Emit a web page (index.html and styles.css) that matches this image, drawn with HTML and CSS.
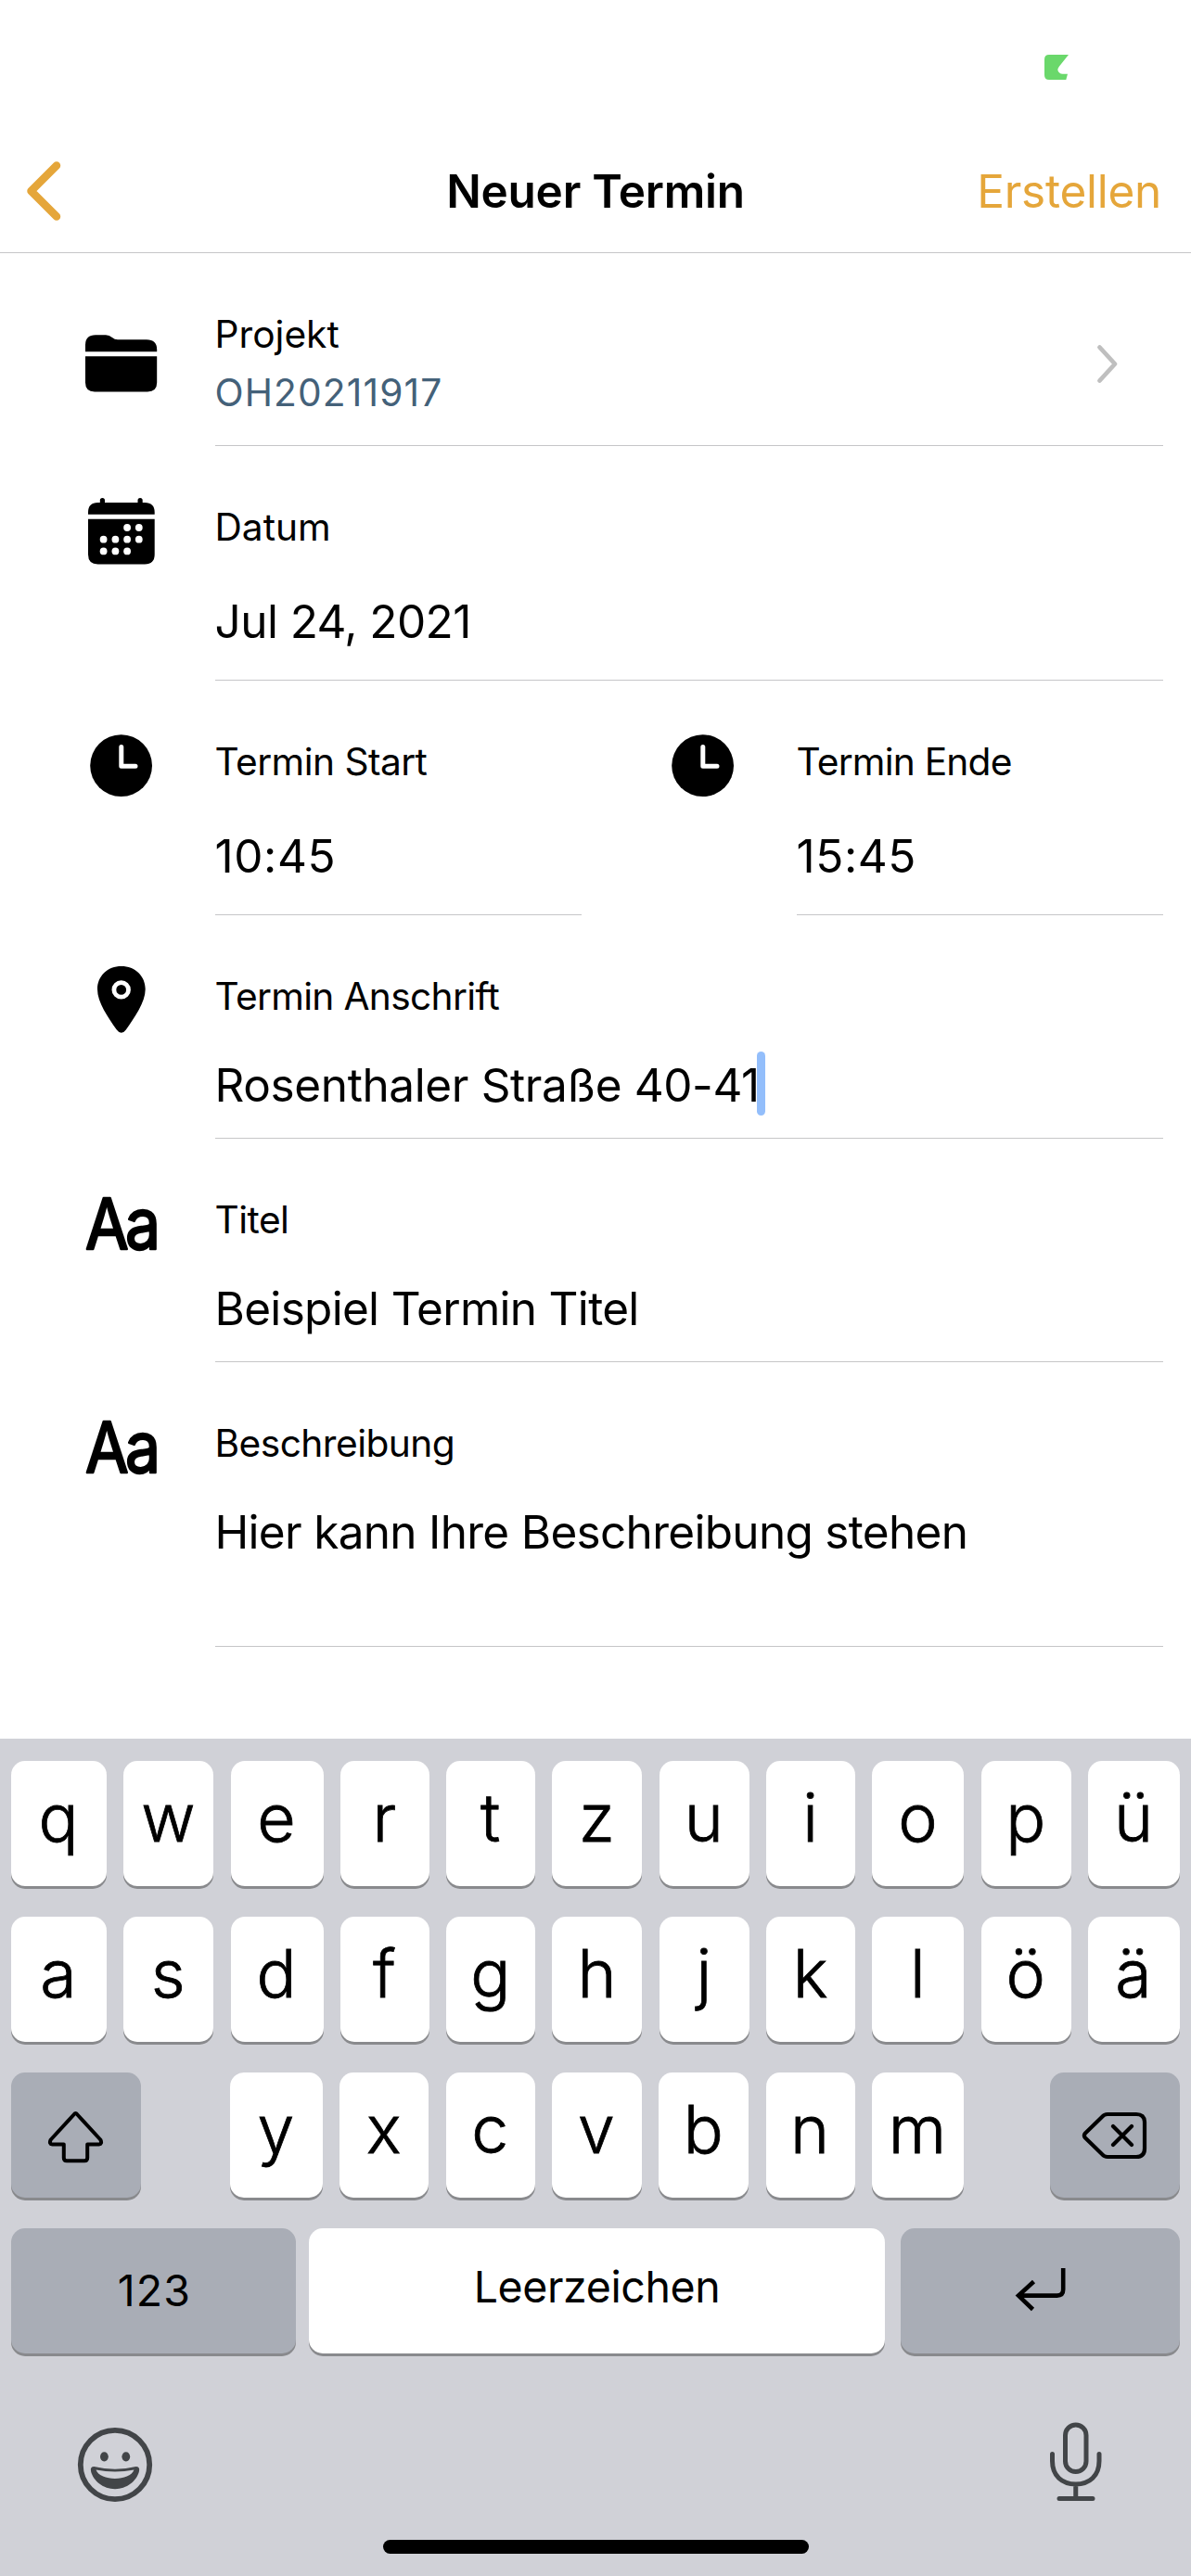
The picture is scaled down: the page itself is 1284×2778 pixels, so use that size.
FILE: index.html
```html
<!DOCTYPE html>
<html lang="de">
<head>
<meta charset="utf-8">
<title>Neuer Termin</title>
<link rel="stylesheet" href="styles.css">
</head>
<body>
<svg class="defs" width="0" height="0" aria-hidden="true">
  <symbol id="clock" viewBox="0 0 80 80">
    <circle cx="39.6" cy="39.7" r="33.4"/>
    <path d="M39.8 19.5V40.2H55" fill="none" stroke="#fff" stroke-width="5" stroke-linecap="round" stroke-linejoin="round"/>
  </symbol>
</svg>
<div class="screen">
  <header class="status">
    <svg width="26" height="27" viewBox="0 0 26 27"><path d="M5 0H26L16 12.500Q12.500 17 16.500 19.800Q17.500 20.700 19.500 20.700H25L23.300 27H5Q0 27 0 22V5Q0 0 5 0Z" fill="#6ad86b"/></svg>
  </header>
  <nav class="nav">
    <svg class="back" width="40" height="70" viewBox="0 0 40 70"><path d="M34 7.500L6.500 35L34 62.500" fill="none" stroke="#e5a63a" stroke-width="8.500" stroke-linecap="round" stroke-linejoin="round"/></svg>
    <h1 class="title">Neuer Termin</h1>
    <a class="create">Erstellen</a>
  </nav>
  <main class="form">
    <section class="row">
      <svg class="icon icon-folder" viewBox="0 0 80 80"><path d="M1 27.300V20Q1 9.300 12 9.300H23Q27 9.300 30 12Q32.500 14.300 36 14.300H67Q78.200 14.300 78.200 25V27.300ZM1 32.300H78.200V60.500Q78.200 70.400 68 70.400H11Q1 70.400 1 60.500Z"/></svg>
      <div class="field project">
        <div>
          <div class="label">Projekt</div>
          <div class="label number">OH20211917</div>
        </div>
        <svg class="disclosure" width="26" height="44" viewBox="0 0 26 44"><path d="M4.500 4.500L21 22.500L4.500 40.500" fill="none" stroke="#bfbfbf" stroke-width="4.800" stroke-linecap="round" stroke-linejoin="round"/></svg>
      </div>
    </section>
    <section class="row">
      <svg class="icon" viewBox="0 0 80 80">
        <path d="M4 21.800V19.500Q4 9 14.500 9H16.800V6.500Q16.800 4 19.400 4T22 6.500V9H57.500V6.500Q57.500 4 60.100 4T62.700 6.500V9H65Q75.700 9 75.700 19.500V21.800ZM4 26.700H75.700V65Q75.700 75.400 65 75.400H14.500Q4 75.400 4 65Z"/>
        <g fill="#fff"><circle cx="46.100" cy="36" r="3.900"/><circle cx="58.800" cy="36" r="3.900"/><circle cx="20.600" cy="48.700" r="3.900"/><circle cx="33.400" cy="48.700" r="3.900"/><circle cx="46.100" cy="48.700" r="3.900"/><circle cx="58.800" cy="48.700" r="3.900"/><circle cx="20.600" cy="61.400" r="3.900"/><circle cx="33.400" cy="61.400" r="3.900"/><circle cx="46.100" cy="61.400" r="3.900"/></g>
      </svg>
      <div class="field">
        <div class="label">Datum</div>
        <div class="value picker date">Jul 24, 2021</div>
      </div>
    </section>
    <div class="pair">
      <section class="row">
        <svg class="icon"><use href="#clock"/></svg>
        <div class="field">
          <div class="label tight">Termin Start</div>
          <div class="value picker time">10:45</div>
        </div>
      </section>
      <section class="row">
        <svg class="icon"><use href="#clock"/></svg>
        <div class="field">
          <div class="label tighter">Termin Ende</div>
          <div class="value picker time">15:45</div>
        </div>
      </section>
    </div>
    <section class="row">
      <svg class="icon" viewBox="0 0 80 80">
        <path d="M39.800 3C25 3 14 13.500 14 27.700C14 42 25.500 58 34.800 71.500Q37 74.700 39.800 74.700T44.800 71.500C54.100 58 65.700 42 65.700 27.700C65.700 13.500 54.600 3 39.800 3Z"/>
        <circle cx="39.700" cy="28.400" r="7.800" fill="none" stroke="#fff" stroke-width="4.800"/>
      </svg>
      <div class="field">
        <div class="label anschrift">Termin Anschrift</div>
        <div class="value address">Rosenthaler Straße 40-41<span class="caret"></span></div>
      </div>
    </section>
    <section class="row">
      <svg class="icon" viewBox="0 0 80 80"><text class="letters" transform="translate(1 67) scale(.89 1)">Aa</text></svg>
      <div class="field">
        <div class="label heading">Titel</div>
        <div class="value">Beispiel Termin Titel</div>
      </div>
    </section>
    <section class="row">
      <svg class="icon" viewBox="0 0 80 80"><text class="letters" transform="translate(1 67) scale(.89 1)">Aa</text></svg>
      <div class="field description">
        <div class="label heading">Beschreibung</div>
        <div class="value">Hier kann Ihre Beschreibung stehen</div>
      </div>
    </section>
  </main>
  <footer class="keyboard">
    <div class="keys">
      <b class="key">q</b><b class="key">w</b><b class="key">e</b><b class="key">r</b><b class="key">t</b><b class="key">z</b><b class="key">u</b><b class="key">i</b><b class="key">o</b><b class="key">p</b><b class="key">ü</b>
    </div>
    <div class="keys">
      <b class="key">a</b><b class="key">s</b><b class="key">d</b><b class="key">f</b><b class="key">g</b><b class="key">h</b><b class="key">j</b><b class="key">k</b><b class="key">l</b><b class="key">ö</b><b class="key">ä</b>
    </div>
    <div class="line">
      <b class="key dark side"><svg width="64" height="60" viewBox="0 0 64 60"><path d="M31.500 6Q32.300 6 33 7L58.300 34.500Q60.500 39 56.500 39.500H44.200V54Q44.200 57.300 41 57.300H22Q18.800 57.300 18.800 54V39.500H6.500Q2.500 39 4.700 34.500L30 7Q30.700 6 31.500 6Z" fill="none" stroke="#000" stroke-width="4" stroke-linejoin="round"/></svg></b>
      <div class="keys middle">
        <b class="key">y</b><b class="key">x</b><b class="key">c</b><b class="key">v</b><b class="key">b</b><b class="key">n</b><b class="key">m</b>
      </div>
      <b class="key dark side"><svg width="72" height="54" viewBox="0 0 72 54"><path d="M28 4H59Q68 4 68 13V41Q68 50 59 50H28Q24.500 50 22 47L4 29.500Q1.800 27 4 24.500L22 7Q24.500 4 28 4ZM34 17L54 37M54 17L34 37" fill="none" stroke="#000" stroke-width="4.200" stroke-linecap="round" stroke-linejoin="round"/></svg></b>
    </div>
    <div class="line">
      <b class="key dark numbers">123</b>
      <b class="key space">Leerzeichen</b>
      <b class="key dark return"><svg width="56" height="50" viewBox="0 0 56 50"><path d="M52.200 2V25Q52.200 31.600 45.500 31.600H4M20.500 16.500L4 31.600L19.500 46.500" fill="none" stroke="#000" stroke-width="4.600"/></svg></b>
    </div>
    <div class="tools">
      <svg width="84" height="90" viewBox="0 0 84 90" fill="#424548">
        <circle cx="42" cy="48" r="37.200" fill="none" stroke="#424548" stroke-width="5.800"/>
        <ellipse cx="30.400" cy="39.300" rx="4.400" ry="5.100"/><ellipse cx="53.800" cy="39.300" rx="4.400" ry="5.100"/>
        <path fill-rule="evenodd" d="M19.500 50Q42 55.500 64.500 50Q69 50 68 55C65.500 65.500 54.500 74.200 42 74.200S18.500 65.500 16 55Q15 50 19.500 50ZM21.500 53.600C24 60 32.500 63 42 63S60 60 62.500 53.600Q42 57.500 21.500 53.600Z"/>
      </svg>
      <svg width="84" height="90" viewBox="0 0 84 90" fill="none" stroke="#424548" stroke-width="5" stroke-linecap="round">
        <rect x="30.500" y="5" width="22.500" height="50.500" rx="11.250"/>
        <path d="M16.500 36.500V44C16.500 60 27 69 41.750 69S67 60 67 44V36.500M41.750 69V84.500M24 84.500H60"/>
      </svg>
    </div>
    <div class="home"></div>
  </footer>
</div>
</body>
</html>
```
FILE: styles.css
```css
* { box-sizing: border-box; }

body {
  margin: 0;
  background: #fff;
  color: #000;
  font-family: Inter, "Liberation Sans", sans-serif;
}

svg { display: block; }
.defs { position: absolute; }

.screen {
  display: flex;
  flex-direction: column;
  width: 1284px;
  height: 2778px;
}

/* Status and navigation bars */
.status {
  display: flex;
  justify-content: flex-end;
  height: 140px;
  padding: 59px 132px 0 0;
}

.nav {
  display: grid;
  grid-template-columns: 1fr auto 1fr;
  align-items: center;
  height: 133px;
  padding: 0 32px 0 27px;
  border-bottom: 1px solid #c6c6c8;
}

.title {
  margin: 0 0 0 5px;
  font-size: 49.5px;
  font-weight: 600;
  letter-spacing: -0.25px;
  line-height: 62px;
}

.create {
  justify-self: end;
  color: #e5a63a;
  font-size: 49.5px;
  letter-spacing: -0.27px;
  line-height: 60px;
}

/* Form */
.form {
  display: flex;
  flex-direction: column;
  width: 1254px;
  height: 1602px;
}

.pair {
  display: grid;
  grid-template-columns: 1fr 1fr;
}

.row {
  display: grid;
  grid-template-columns: 232px 1fr;
}

.icon {
  width: 80px;
  height: 80px;
  margin: 52px 0 0 91px;
  overflow: visible;
}

.icon-folder { margin-top: 79px; }

.letters {
  font-size: 76px;
  font-weight: 400;
  letter-spacing: -4px;
  stroke: #000;
  stroke-width: 2.4px;
  stroke-linejoin: round;
}

.field {
  padding-top: 56px;
  border-bottom: 1px solid #c6c6c8;
}

.project {
  display: flex;
  align-items: center;
  justify-content: space-between;
  height: 208px;
  padding: 56px 47px 25px 0;
}

.label {
  font-size: 40.7px;
  line-height: 63px;
  text-indent: -0.5px;
  white-space: nowrap;
}

.number {
  color: #446179;
  letter-spacing: 1.13px;
}

.tight { letter-spacing: -0.55px; }
.tighter { letter-spacing: -0.8px; }
.anschrift { letter-spacing: -0.68px; }
.heading { letter-spacing: -0.55px; }

.value {
  position: relative;
  height: 87px;
  margin-top: 34px;
  font-size: 49.5px;
  letter-spacing: -0.7px;
  line-height: 60px;
  text-indent: -0.5px;
  white-space: nowrap;
}

.picker {
  height: 93px;
  margin-top: 40px;
}

.date { letter-spacing: -0.57px; }
.time { letter-spacing: 0.6px; }
.address { letter-spacing: -0.38px; }
.description .value { height: 153px; }

.caret {
  position: absolute;
  top: -6px;
  left: 584px;
  width: 9px;
  height: 69px;
  border-radius: 4.5px;
  background: #93befb;
}

/* Keyboard */
.keyboard {
  display: flex;
  flex-direction: column;
  gap: 33px;
  height: 903px;
  padding: 24px 12px 0;
  background: #d0d1d7;
}

.keys {
  display: grid;
  grid-template-columns: 103px 97px 100px 96px 96px 97px 97px 96px 99px 97px 99px;
  justify-content: space-between;
}

.middle {
  grid-template-columns: 100px 96px 96px 97px 97px 96px 99px;
  width: 791px;
  margin: 0 auto 0 96px;
}

.line { display: flex; }

.key {
  display: flex;
  align-items: center;
  justify-content: center;
  height: 135px;
  padding: 0 1px 13px 0;
  border-radius: 15px;
  background: #fff;
  box-shadow: 0 3px 0 #898a8d;
  font-size: 71.5px;
  font-weight: 300;
  line-height: 87px;
  -webkit-text-stroke: 0.8px #000;
}

.dark { background: #a9adb6; }

.side {
  width: 140px;
  padding: 0;
}

.numbers, .space {
  font-size: 46.5px;
  font-weight: 400;
  line-height: 60px;
  -webkit-text-stroke: 0;
}

.numbers {
  width: 307px;
  margin-right: 14px;
  padding: 0 0 1px 2px;
  letter-spacing: 1.2px;
}

.space {
  flex: 1;
  padding: 0 0 9px;
  letter-spacing: -0.41px;
}

.return {
  width: 301px;
  margin-left: 17px;
  padding: 0 0 4px;
}

.tools {
  display: flex;
  justify-content: space-between;
  margin-top: 39px;
  padding: 0 70px;
}

.home {
  align-self: center;
  width: 459px;
  height: 15px;
  margin-top: 6px;
  border-radius: 7.5px;
  background: #000;
}
```
